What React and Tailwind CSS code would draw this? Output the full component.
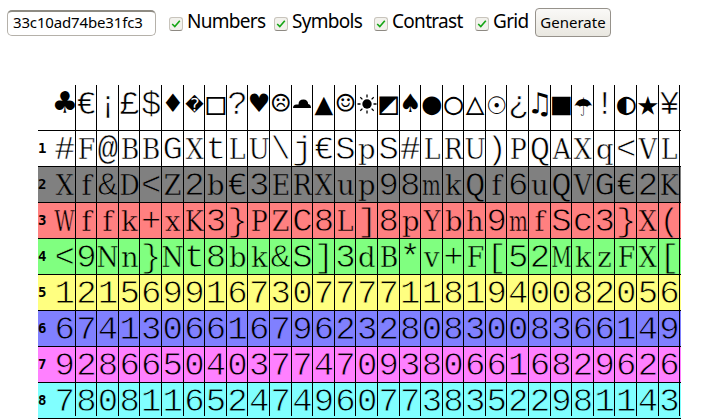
import React from "react";

const SYMBOLS = [..."♣€¡£$♦\uFFFD□?♥☹☁▲☺☀◩♠●○△☉¿♫■☂!◐★¥"];

const ROWS = [
  { text: "#F@BBGXtLU\\j€SpS#LRU)PQAXq<VL", bg: "bg-white", mono: "[-webkit-text-stroke:0.8px_#fff]", slab: "[-webkit-text-stroke:0.4px_#fff]" },
  { text: "Xf&D<Z2b€3ERXup98mkQf6uQVG€2K", bg: "bg-[#808080]", mono: "[-webkit-text-stroke:0.8px_#808080]", slab: "[-webkit-text-stroke:0.4px_#808080]" },
  { text: "Wffk+xK3}PZC8L]8pYbh9mfSc3}X(", bg: "bg-[#ff8080]", mono: "[-webkit-text-stroke:0.8px_#ff8080]", slab: "[-webkit-text-stroke:0.4px_#ff8080]" },
  { text: "<9Nn}Nt8bk&S]3dB*v+F[52MkzFX[", bg: "bg-[#80ff80]", mono: "[-webkit-text-stroke:0.8px_#80ff80]", slab: "[-webkit-text-stroke:0.4px_#80ff80]" },
  { text: "12156991673077771181940082056", bg: "bg-[#ffff80]", mono: "[-webkit-text-stroke:0.8px_#ffff80]", slab: "" },
  { text: "67413066167962328083008366149", bg: "bg-[#8080ff]", mono: "[-webkit-text-stroke:0.8px_#8080ff]", slab: "" },
  { text: "92866504037747093806616829626", bg: "bg-[#ff80ff]", mono: "[-webkit-text-stroke:0.8px_#ff80ff]", slab: "" },
  { text: "78081165247496077383522981143", bg: "bg-[#80ffff]", mono: "[-webkit-text-stroke:0.8px_#80ffff]", slab: "" },
];

const MONO = "font-['Liberation_Mono',monospace] text-[34px]";
const SLAB = "font-['DejaVu_Serif',serif] [font-stretch:condensed] font-light text-[27px]";

function Glyph({ ch, row }) {
  let cls = MONO + " " + row.mono;
  if (/[@#*]/.test(ch)) cls = MONO + " " + row.slab;
  else if (/[MWm]/.test(ch)) cls = SLAB + " scale-x-[0.82] " + row.slab;
  else if (/[A-Z]/.test(ch) && !/[SCQG]/.test(ch)) cls = SLAB + " scale-x-[1.04] " + row.slab;
  else if (/[a-z]/.test(ch) && !/[tjc]/.test(ch)) cls = SLAB + " scale-x-[1.13] " + row.slab;
  return (
    <span className="flex h-[36px] w-[21.607px] items-start justify-center">
      <span className={"leading-[40px] " + cls}>{ch}</span>
    </span>
  );
}

function symbolClass(ch) {
  if (/[€¡£$?¿!¥]/.test(ch)) return MONO + " leading-[41px] [-webkit-text-stroke:0.7px_#fff]";
  if (ch === "\uFFFD") return "font-['DejaVu_Sans',sans-serif] text-[18px] leading-[39px]";
  if (/[♣★]/.test(ch)) return "font-['DejaVu_Sans_Mono',monospace] text-[36px] leading-[35px]";
  if (ch === "☂") return "font-['DejaVu_Sans_Mono',monospace] text-[31px] leading-[37px] scale-y-[1.15]";
  return "font-['DejaVu_Sans_Mono',monospace] text-[31px] leading-[37px]";
}

function SymbolCell({ ch }) {
  let content = <span className={symbolClass(ch)}>{ch}</span>;
  if (ch === "☁") {
    content = (
      <svg width="18" height="20" viewBox="0 0 18 20" className="mt-[9px] shrink-0" aria-label={ch}>
        <path d="M0 14 Q0 10.5 3.5 10.5 L5.5 10.5 Q5.5 5.5 10.5 5.5 Q14.8 5.5 15.2 10 Q18 10.6 18 14 Z" />
      </svg>
    );
  } else if (ch === "☀") {
    content = (
      <svg width="20" height="20" viewBox="0 0 20 20" className="mt-[9px] shrink-0" aria-label={ch}>
        <circle cx="10" cy="10" r="4.7" />
        <path
          d="M10 .5V3.5M10 16.5V19.5M.5 10H3.5M16.5 10H19.5M3.3 3.3L5.4 5.4M14.6 14.6L16.7 16.7M16.7 3.3L14.6 5.4M5.4 14.6L3.3 16.7"
          stroke="black"
          strokeWidth="1.3"
        />
      </svg>
    );
  }
  return (
    <span className="flex h-[39px] w-[21.607px] items-start justify-center">{content}</span>
  );
}

function Check({ label, className }) {
  return (
    <label className={"flex shrink-0 items-start " + className}>
      <span className="mt-[9px] mr-[4px] flex h-[14px] w-[14px] shrink-0 items-center justify-center rounded-[3px] border border-[#c8c4bc] border-b-[#8d8982] bg-[#f2f1ec]">
        <svg width="10" height="10" viewBox="0 0 10 10" fill="none">
          <path d="M1.2 5 L3.8 7.5 L8.8 1.8" stroke="#14a514" strokeWidth="1.6" />
        </svg>
      </span>
      <span className="text-[19px] leading-[26px] tracking-[-0.7px]">{label}</span>
    </label>
  );
}

export default function App() {
  return (
    <div className="h-[420px] w-[720px] overflow-hidden bg-white font-['Noto_Sans',sans-serif] text-black">
      <div className="flex h-[85px] items-start pt-[8px] pl-[7px]">
        <input
          readOnly
          value="33c10ad74be31fc3"
          className="mt-[2px] h-[26px] w-[149px] shrink-0 rounded-[5px] border border-[#b5b1aa] border-t-2 border-t-[#8e8b83] bg-white pb-[3px] pl-[5px] text-[15px] tracking-[-0.15px] outline-none"
        />
        <Check label="Numbers" className="ml-[13px] w-[105px]" />
        <Check label="Symbols" className="w-[100px]" />
        <Check label="Contrast" className="w-[101px]" />
        <Check label="Grid" className="w-[60px]" />
        <button className="flex h-[29px] w-[76px] shrink-0 items-center justify-center rounded-[4px] border border-[#96928b] bg-gradient-to-b from-[#faf9f7] to-[#e9e7e0] text-[15px]">
          Generate
        </button>
      </div>
      <div className="relative ml-[38px] w-[643px]">
        <div className="flex h-[45px] pl-[16px]">
          {SYMBOLS.map((ch, i) => (
            <SymbolCell key={i} ch={ch} />
          ))}
        </div>
        {ROWS.map((row, r) => (
          <div key={r} className={"flex h-[36px] items-center " + row.bg}>
            <span className="w-[16px] shrink-0 text-[14px] leading-none font-bold font-['DejaVu_Sans_Mono',monospace]">
              {r + 1}
            </span>
            {[...row.text].map((ch, i) => (
              <Glyph key={i} ch={ch} row={row} />
            ))}
          </div>
        ))}
        {/* grid lines overlay the characters */}
        <div className="absolute top-[45px] left-0 w-full">
          {[...ROWS, null].map((_, i) => (
            <div key={i} className="h-[36px] border-t border-black" />
          ))}
        </div>
        <div className="absolute top-0 left-[16px] flex h-[331px]">
          {SYMBOLS.map((_, i) => (
            <div key={i} className="w-[21.607px] border-r border-black" />
          ))}
        </div>
      </div>
    </div>
  );
}
